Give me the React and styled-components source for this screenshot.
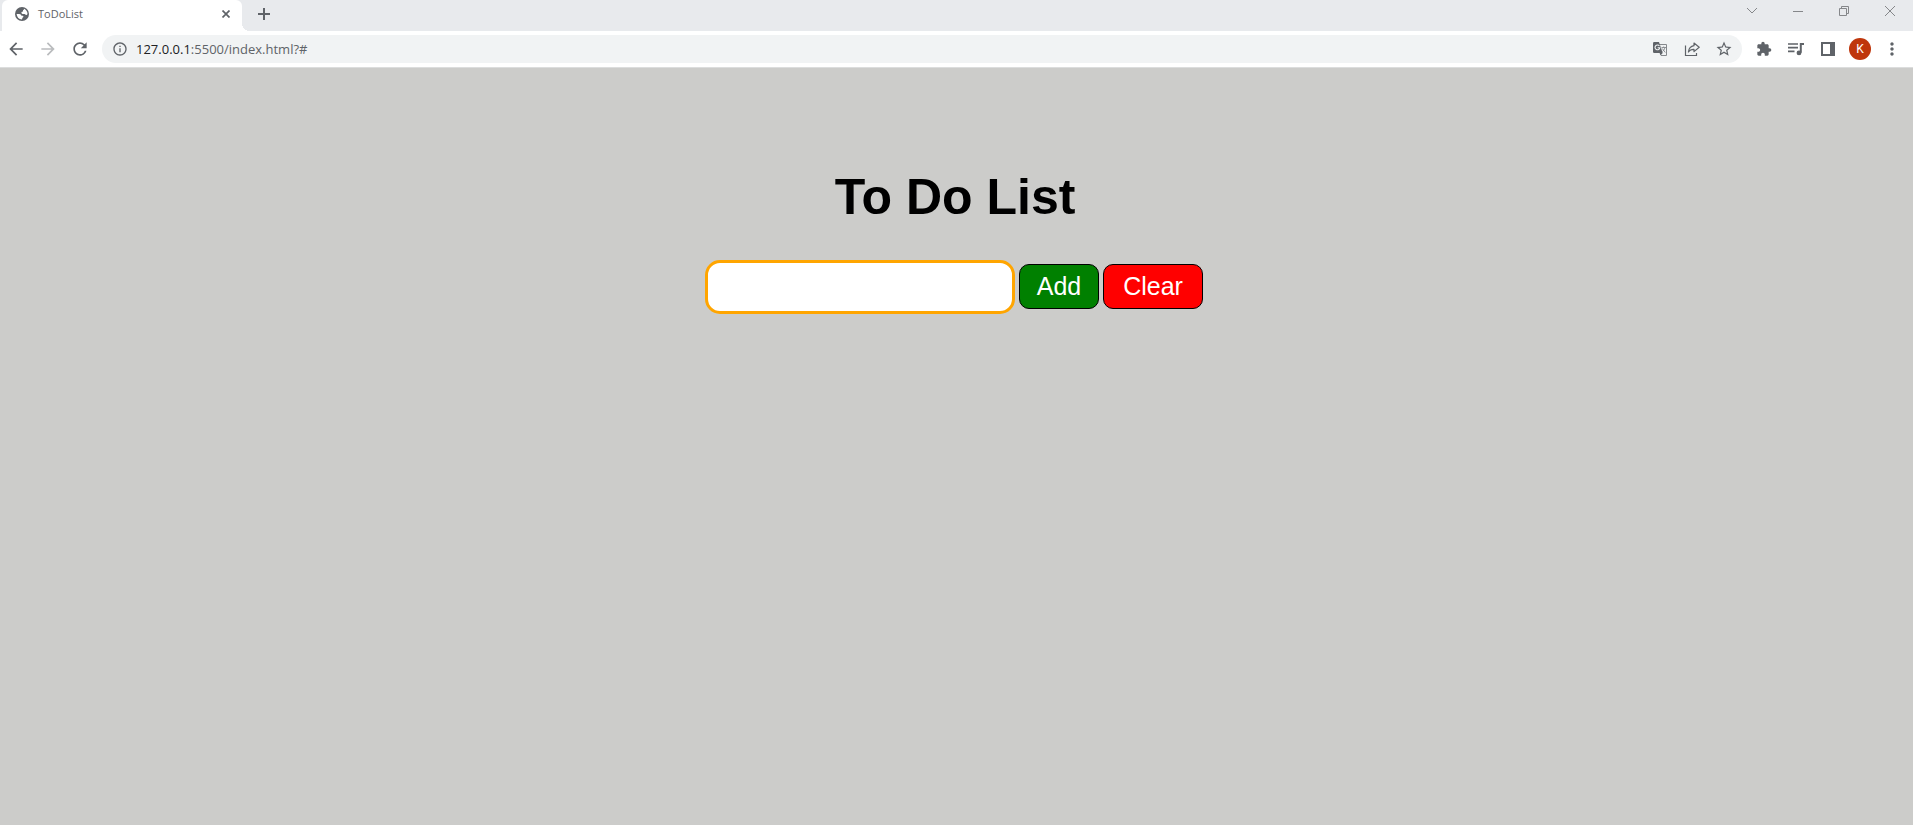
import React from "react";
import styled, { createGlobalStyle } from "styled-components";
import {
  MdArrowBack,
  MdArrowForward,
  MdRefresh,
  MdInfoOutline,
  MdStarBorder,
  MdExtension,
  MdMoreVert,
} from "react-icons/md";

const GlobalStyle = createGlobalStyle`
  *, *::before, *::after { box-sizing: border-box; }
  body { margin: 0; background: #ccccca; }
`;

const Browser = styled.div`
  min-height: 100vh;
  display: flex;
  flex-direction: column;
  font-family: "Open Sans", "Noto Sans", sans-serif;
  color: #5f6368;
`;

const TabStrip = styled.header`
  display: flex;
  align-items: flex-start;
  height: 31px;
  padding-left: 2px;
  background: #e8eaed;
`;

const Tab = styled.div`
  display: flex;
  align-items: center;
  gap: 9px;
  width: 240px;
  height: 31px;
  padding: 0 8px 3px 13px;
  border-radius: 6px 6px 0 0;
  background: #ffffff;
`;

const TabTitle = styled.span`
  flex: 1;
  font-size: 11px;
  line-height: 16px;
`;

const TabFlare = styled.span`
  align-self: flex-end;
  width: 8px;
  height: 8px;
  background: radial-gradient(circle at 100% 0, #e8eaed 8px, #ffffff 8px);
`;

const IconButton = styled.button`
  display: inline-flex;
  align-items: center;
  justify-content: center;
  flex: none;
  width: ${(p) => p.$width || 32}px;
  height: ${(p) => p.$height || 28}px;
  padding: 0;
  border: 0;
  background: transparent;
  color: ${(p) => p.$color || "#5f6368"};
  font: inherit;
`;

const WindowControls = styled.div`
  display: flex;
  margin-left: auto;
`;

const Toolbar = styled.nav`
  display: flex;
  align-items: center;
  height: 37px;
  padding-right: 5px;
  background: #ffffff;
  border-bottom: 1px solid #dcdddd;
`;

const AddressBar = styled.div`
  display: flex;
  align-items: center;
  flex: 1;
  height: 28px;
  margin: 0 6px;
  padding: 0 2px;
  border-radius: 14px;
  background: #f1f3f4;
`;

const Address = styled.a`
  flex: 1;
  font-size: 13px;
  line-height: 20px;
  color: #5f6368;
  text-decoration: none;
`;

const Host = styled.span`
  color: #202124;
`;

const Avatar = styled.span`
  display: flex;
  align-items: center;
  justify-content: center;
  width: 22px;
  height: 22px;
  border-radius: 50%;
  background: #bf360c;
  color: #ffffff;
  font-family: Roboto, sans-serif;
  font-size: 12px;
  line-height: 16px;
`;

const Page = styled.main`
  flex: 1;
  display: flex;
  flex-direction: column;
  align-items: center;
  gap: 34px;
  padding: 101px 3px 0 0;
  font-family: "Liberation Sans", Arial, sans-serif;
`;

const Title = styled.h1`
  margin: 0;
  font-size: 50px;
  line-height: 57px;
  color: #000000;
`;

const TodoForm = styled.form`
  display: flex;
  align-items: center;
  gap: 4px;
  padding-right: 2px;
`;

const TaskInput = styled.input`
  width: 310px;
  height: 54px;
  padding: 0 12px;
  border: 3px solid orange;
  border-radius: 15px;
  outline: none;
  background: #ffffff;
  font: 25px "Liberation Sans", Arial, sans-serif;
`;

const ActionButton = styled.button`
  width: ${(p) => p.$width}px;
  height: 45px;
  margin: 0 0 1px;
  padding: 0;
  border: 1px solid #000000;
  border-radius: 10px;
  background: ${(p) => p.$fill};
  color: #ffffff;
  font: 25px "Liberation Sans", Arial, sans-serif;
`;

const Stroke = ({ size = 12, width = 1, children }) => (
  <svg
    width={size}
    height={size}
    viewBox={`0 0 ${size} ${size}`}
    fill="none"
    stroke="currentColor"
    strokeWidth={width}
    aria-hidden="true"
  >
    {children}
  </svg>
);

const GlobeIcon = () => (
  <svg width="14" height="14" viewBox="0 0 14 14" aria-hidden="true">
    <circle cx="7" cy="7" r="7" fill="#5f6368" />
    <path
      d="M9.2 1.8Q12.4 3.6 12.5 7Q12 8.2 10.7 7.8L9.6 6.9H7.4Q6.2 6.6 6.4 5.3Q6.8 4.5 8 4.4V3.2Q8.9 2.9 9.2 1.8Z"
      fill="#ffffff"
    />
    <path
      d="M1.6 6.9H4.2Q6.3 7 6.5 8.7H7.8Q8.6 9 8.4 10Q7.2 10.4 7 12.4Q2.2 12 1.6 6.9Z"
      fill="#ffffff"
    />
  </svg>
);

const TranslateIcon = () => (
  <svg width="14" height="14" viewBox="0 0 14 14" aria-hidden="true">
    <path d="M5 2.5h8.5v11H8" fill="none" stroke="#85888c" />
    <path d="M0 1.2Q0 0 1.2 0H6l3.7 11H1.2Q0 11 0 9.8Z" fill="#5f6368" />
    <path d="M9.7 11 7.5 13.5 6.6 11Z" fill="#5f6368" />
    <path d="M6.4 4A2.4 2.4 0 1 0 6.8 5.8H4.6" fill="none" stroke="#f1f3f4" strokeWidth="1.1" />
    <path d="M8.5 5.5H13M10.7 4.5v1M12 5.5Q11.5 8 9.5 9.5M9.3 6.5 12.3 10.5" fill="none" stroke="#85888c" strokeWidth=".9" />
  </svg>
);

const ShareIcon = () => (
  <Stroke size={16} width={1.2}>
    <path d="M1.5 4.5v10h11V12" />
    <path d="M10 2 15.2 6.3 10 10.6V8.3Q6.2 8.2 4.4 11Q5 5.6 10 4.7Z" strokeLinejoin="round" />
  </Stroke>
);

const PlaylistIcon = () => (
  <Stroke size={16} width={1.7}>
    <path d="M0 3h10M0 6.7h10M0 10.4h6.5" />
    <path d="M12.8 11.8V3H16" strokeWidth="2" />
    <circle cx="11" cy="11.9" r="2.4" fill="currentColor" stroke="none" />
  </Stroke>
);

const SidePanelIcon = () => (
  <Stroke size={14} width={2}>
    <path d="M1 1h12v12H1Z" />
    <path d="M9 1h4v12H9Z" fill="currentColor" stroke="none" />
  </Stroke>
);

export default function App() {
  return (
    <>
      <GlobalStyle />
      <Browser>
        <TabStrip>
          <Tab>
            <GlobeIcon />
            <TabTitle>ToDoList</TabTitle>
            <IconButton $width={16} $height={16} aria-label="Close tab">
              <Stroke size={8} width={1.7}>
                <path d="M.5.5l7 7M7.5.5l-7 7" />
              </Stroke>
            </IconButton>
          </Tab>
          <TabFlare />
          <IconButton aria-label="New tab" $width={28}>
            <Stroke size={12} width={2}>
              <path d="M6 0v12M0 6h12" />
            </Stroke>
          </IconButton>
          <WindowControls>
            <IconButton $width={46} $height={22} $color="#85878a" aria-label="Search tabs">
              <Stroke><path d="M1 3l5 5 5-5" /></Stroke>
            </IconButton>
            <IconButton $width={46} $height={22} $color="#85878a" aria-label="Minimize">
              <Stroke><path d="M1 6.5h10" /></Stroke>
            </IconButton>
            <IconButton $width={46} $height={22} $color="#85878a" aria-label="Restore">
              <Stroke><path d="M1.5 3.5h7v7h-7ZM3.5 3.5v-2h7v7h-2" /></Stroke>
            </IconButton>
            <IconButton $width={46} $height={22} $color="#85878a" aria-label="Close window">
              <Stroke><path d="M1 1l10 10M11 1L1 11" /></Stroke>
            </IconButton>
          </WindowControls>
        </TabStrip>

        <Toolbar>
          <IconButton aria-label="Back"><MdArrowBack size={20} /></IconButton>
          <IconButton aria-label="Forward" $color="#babcbe"><MdArrowForward size={20} /></IconButton>
          <IconButton aria-label="Reload"><MdRefresh size={20} /></IconButton>
          <AddressBar>
            <IconButton aria-label="Site information"><MdInfoOutline size={16} /></IconButton>
            <Address href="#"><Host>127.0.0.1</Host>:5500/index.html?#</Address>
            <IconButton aria-label="Translate"><TranslateIcon /></IconButton>
            <IconButton aria-label="Share"><ShareIcon /></IconButton>
            <IconButton aria-label="Bookmark"><MdStarBorder size={18} /></IconButton>
          </AddressBar>
          <IconButton aria-label="Extensions"><MdExtension size={16} /></IconButton>
          <IconButton aria-label="Media controls"><PlaylistIcon /></IconButton>
          <IconButton aria-label="Side panel"><SidePanelIcon /></IconButton>
          <IconButton aria-label="Profile"><Avatar>K</Avatar></IconButton>
          <IconButton aria-label="Menu"><MdMoreVert size={20} /></IconButton>
        </Toolbar>

        <Page>
          <Title>To Do List</Title>
          <TodoForm onSubmit={(e) => e.preventDefault()}>
            <TaskInput type="text" aria-label="New task" />
            <ActionButton type="submit" $width={80} $fill="green">Add</ActionButton>
            <ActionButton type="reset" $width={100} $fill="red">Clear</ActionButton>
          </TodoForm>
        </Page>
      </Browser>
    </>
  );
}
